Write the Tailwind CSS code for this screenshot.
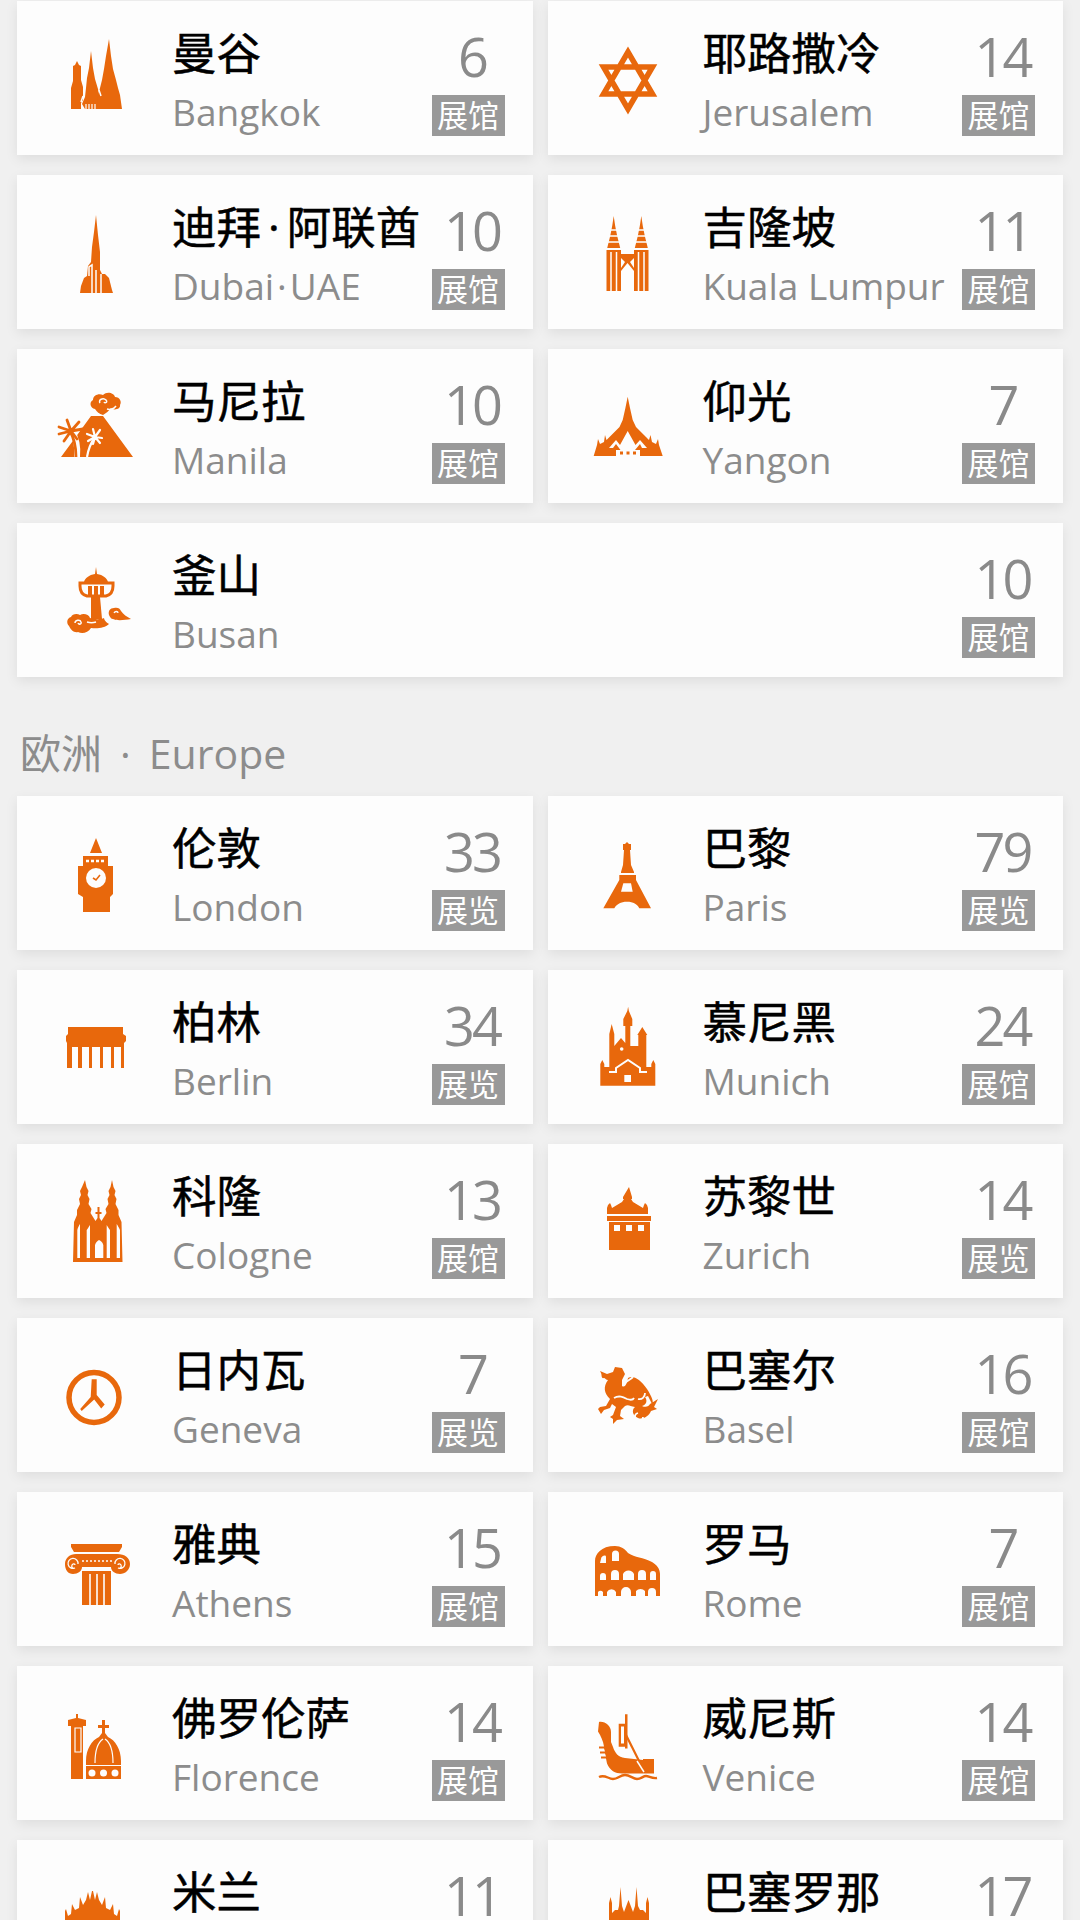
<!DOCTYPE html>
<html lang="zh-CN">
<head>
    <meta charset="UTF-8">
    <meta name="viewport" content="width=device-width, initial-scale=1.0">
    <title>城市展馆</title>
    <script src="https://cdn.jsdelivr.net/npm/@tailwindcss/browser@4"></script>
</head>
<body class="bg-[#f0f0f0] font-['Open_Sans','Noto_Sans_CJK_SC',sans-serif]">
    <div class="h-[1920px] overflow-hidden px-[17px] pt-[1px]">
        <div id="asia" class="grid grid-cols-2 gap-x-[15px] gap-y-[20px]"></div>
        <h2 class="mt-[57px] mb-[24px] h-[38px] leading-[38px] pl-[3px] text-[41px] font-normal text-[#8c8c8c] flex">
            <span>欧洲</span><span class="ml-[18px]">·</span><span class="ml-[18px]">Europe</span>
        </h2>
        <div id="europe" class="grid grid-cols-2 gap-x-[15px] gap-y-[20px]"></div>
    </div>

    <script>
    // city glyphs, drawn on a 100x100 grid with fill set by the parent svg
    const W = '#fdfdfd';
    const icons = {
        bangkok: `<path d="M32 33l2 4 2 1v14l2 7v13l-2 3v6H26V60l2-7V38l2-1z"/><path d="M46 23l2 17 2 11 3 10 2 10-2 10H40l-3-5 3-7 1-9 1-10 2-10z"/><path d="M64 11l2 17 2 13 3 11 2 8 2 7 2 14H52l1-12 2-9 2-8 2-11 2-13z"/><path d="M41 81v-5M44 81v-5M47 81v-5M50 81v-5" stroke="${W}" stroke-width="1.200"/><path d="M38 68l-2 6M54 62l2 6" stroke="${W}" stroke-width="1.500"/>`,
        dubai: `<path d="M51 13l2 20 2 17v18l2 4h3l4 4 3 12 1 3H35l1-7 3-8 3-2 1-10 3-4 1-15 2-15z"/><path d="M44 74v-9l3-2v28M51 68v23M56 72v19" stroke="${W}" stroke-width="1.500" fill="none"/>`,
        manila: `<path d="M16 81l14-19 16-22h12l30 41z"/><path d="M58 39c-4-1-6-3-8-6-5-1-6-7-2-9 0-5 6-7 10-5 4-4 11-2 12 2 5 0 7 5 5 8 1 4-6 6-9 3-2 3-5 5-8 7z"/><path d="M55 27c-2-3 3-6 6-3 2 2-1 4-2 2M62 33c3 1 7 0 9-3" stroke="${W}" stroke-width="1.500" fill="none"/><path d="M32 81c1-9 0-18-6-27" stroke="${W}" stroke-width="6" fill="none"/><path d="M31 81c0-9-1-17-6-26" stroke="currentColor" stroke-width="2.800" fill="none"/><path d="M26 55L14 51M26 55l-12 3M26 55l-4-11M26 55l8-9M26 55l12-2M26 55l-7 10M26 55l6 8" stroke="currentColor" stroke-width="2.800" stroke-linecap="round"/><path d="M42 81c1-6 3-13 8-20" stroke="${W}" stroke-width="2.200" fill="none"/><path d="M50 61l-8-3M50 61l-7 4M50 61l-2-8M50 61l5-7M50 61l7 1M50 61l5 6M50 61l-2 7" stroke="${W}" stroke-width="2.200" stroke-linecap="round"/>`,
        busan: `<path d="M51 17l1 7c6 1 10 4 11 8H39c1-4 5-7 11-8z"/><path d="M35 33h33v3c0 6-3 9-7 10H42c-4-1-7-4-7-10z" fill="none" stroke="currentColor" stroke-width="3"/><path d="M43 36v9h4v-9zM49 36v9h4v-9zM55 36v9h4v-9z"/><path d="M46 47h9l2 22H46z"/><path d="M24 76c-3-3-2-8 2-9 1-3 6-4 9-2 3-2 9-1 10 3 6 2 12 1 14 0 0 3 5 6 5 6-4 4-12 5-18 4-3 5-9 6-13 4-4 1-7-2-9-6z"/><path d="M30 73c0-3 5-4 6-1 1 2-2 3-3 1M42 72c3 1 6 1 9 0" stroke="${W}" stroke-width="1.500" fill="none"/><path d="M64 65c-1-4 1-7 5-7 3-1 6 0 7 3 2 3 6 6 10 8-6 1-14 2-18 0-2 0-3-2-4-4z"/><path d="M69 63c1-2 4-2 4 0" stroke="${W}" stroke-width="1.300" fill="none"/>`,
        london: `<path d="M51 15l6 15H45z"/><path d="M38 33h25v10h5v28l-3 3v15H38V74l-5-3V43h5z"/><circle cx="51" cy="55" r="10" fill="${W}"/><path d="M48 55l3 2 4-5" stroke="currentColor" stroke-width="1.600" fill="none"/><path d="M41 38h3M46 38h3M51 38h3M56 38h3" stroke="${W}" stroke-width="2.400"/>`,
        berlin: `<path d="M23 30h55v7l3 2v5l-2 2v25h-3V50H69v21h-3V50H58v21h-3V50H47v21h-3V50H37v21h-4V50h-6v21h-5V46l-1-2v-5l2-2z"/>`,
        cologne: `<path d="M40 9l1.500 7 2 4-1 4 2 4-1 5 3 5-1 4 5 8 2-3v-4h-2v-2h2v-5h2v5h2v2h-2v4l2 3 5-8-1-4 3-5-1-5 2-4-1-4 2-4 1.500-7 1.500 7 2 4-1 4 2 4-1 5 3 6 0 5 3 7 1 40H28l1-40 3-7 0-5 3-6-1-5 2-4-1-4 2-4z"/><path d="M32.300 87V59c.8-3 1.500-4 2.700-6v34zM41.700 87V59c1.500-2 2-3 3.300-5v33zM61.700 87V54c1 2 2 3 3.300 5v28zM71.700 87V53c1.200 2 2 3 3.300 6v28zM50 87V74c1-3 2.500-4 4-5 1.800 1 3.500 2 4.300 5v13z" fill="${W}"/>`,
        geneva: `<circle cx="49" cy="52.500" r="25" fill="none" stroke="currentColor" stroke-width="5.500"/><path d="M46.700 34.300h5v15.700l8 9.500-3.500 4-7-9-12.500 11.500-1.500-2 10.500-12z"/>`,
        athens: `<path d="M26 25h51v3l-3 5H29l-3-5z"/><path d="M31 35h41c8 0 13 4 13 10s-5 10-10 10c-5 0-9-3-9-7H37c0 4-4 7-9 7s-8-4-8-10 5-10 11-10z"/><path d="M33 45a5 5 0 1 0-3 4c-2 1-4-1-3-3s3-1 3 0M70 45a5 5 0 1 1 3 4c2 1 4-1 3-3s-3-1-3 0" stroke="${W}" stroke-width="1.300" fill="none"/><path d="M37 42h30" stroke="${W}" stroke-width="1.500" stroke-dasharray="2 2"/><path d="M37 52h29v34H37z"/><path d="M45 55v31M52 55v31M59 55v31" stroke="${W}" stroke-width="1.600"/>`,
        florence: `<path d="M31 21h2v4l8 2v6h-3v53H26V33h-3v-6l8-2z"/><path d="M30 35h6v24h-6z" fill="none" stroke="${W}" stroke-width="1.200"/><path d="M57 27h3v5h4v3h-4v5l3 4c7 3 13 12 13 24v4H41v-4c0-12 6-21 13-24l3-4v-5h-4v-3h4z"/><path d="M58 46c-6 4-8 14-8 24M60 46c6 4 8 14 8 24" stroke="${W}" stroke-width="1.200" fill="none"/><path d="M41 73h35v13H41z"/><circle cx="47" cy="80" r="3.500" fill="${W}"/><circle cx="58.500" cy="80" r="3.500" fill="${W}"/><circle cx="70" cy="80" r="3.500" fill="${W}"/>`,
        milan: `<path d="M20 100V44l1-2 2 7 3-2 1-10 3 6 4-2 1-11 3 8 3-5 2-8 2 8 2-9 1 0 2 9 2-8 2 8 3 5 3-8 1 11 4 2 3-6 1 10 3 2 2-7 1 2v56z"/><path d="M45 100V80c1-4 4-6 5.500-7 1.500 1 4.500 3 5.500 7v20z" fill="${W}"/>`,
        jerusalem: `<path d="M52 24L27.500 66h49zM52 81L27.500 39h49z" fill="none" stroke="currentColor" stroke-width="5.500"/>`,
        kl: `<path d="M37.700 14l1.500 10 2 10 3 12h-13l3-12 2-10zM65.300 14l1.500 10 2 10 3 12h-13l3-12 2-10z"/><path d="M30.500 48h14.500v41H30.500zM58 48h14.500v41H58z"/><path d="M45 52h13v4l-4 4 4 6v3l-6.500-8-6.500 8v-3l4-6-4-4z"/><path d="M33 28h9M32 34h11M31 40h13M60.500 28h9M59.500 34h11M58.500 40h13" stroke="${W}" stroke-width="1.500"/><path d="M35 50v39M40.500 50v39M62.500 50v39M68 50v39" stroke="${W}" stroke-width="1.500"/>`,
        yangon: `<path d="M51.700 20.700L54 32l2.700 12 3.300 7 10 10 3 3 1.500-5 1.500 7 4 2 2-5 1 6 3.700 11H17.700L21 69l1-6 2 5 4-2 1-7 1.500 5 3-3 10-10 3.200-7 2.700-12z"/><path d="M33 72l7-8 4 5 7.700-14 7.800 14 4.500-5 7 8h-5l-2-4-5 6H44.500L40 68l-3 4z" fill="${W}"/><path d="M40 74h24v6H40z" fill="${W}"/><path d="M44 75.500h3v3h-3zM50.500 75.500h3v3h-3zM57 75.500h3v3h-3z"/>`,
        paris: `<path d="M51 19l2 2h2v6h-1l1 15 3 7v1H45v-1l2-7 1-15h-1v-6h2zM43.300 52H60v5l15 28.300H63.300c-2-4-6-6.500-12.300-6.500s-10.300 2.500-12.700 6.500H27.300L43.300 57z"/><path d="M47.300 60.300H55l1.700 8.400H45z" fill="${W}"/>`,
        munich: `<path d="M24.300 88.700V67l2-4 2 4v3h5V37l2.400-10 2.600 10v12l6.700-8 4.300 5V29h-2v-7l4-8 .8-4.300.8 4.300 3.400 8v7h-2v20h8V38h-1l5-8 5 8h-1v32h5v-3l2-4 2 4v21.700z"/><path d="M33 75h7v-4l12-8 12 8v4h7" stroke="${W}" stroke-width="2" fill="none"/><circle cx="45.700" cy="52" r="1.800" fill="${W}"/><path d="M48.300 78H55v7h-6.700z" fill="${W}"/>`,
        zurich: `<path d="M53 16l3 10v2h-1l2 3 10 6 1-3 1-2 2 2 1 3v6H31v-6l1-3 2-2 1 2 1 3 10-6 2-3h-1v-2z"/><path d="M31 45h44v5H31zM33 51h41v28H33z"/><path d="M38 54h6v6h-6zM50 54h6v6h-6zM62 54h6v6h-6z" fill="${W}"/>`,
        basel: `<path d="M24 26l7 3 6-2 2-5 7 1 3 6-3 6 0 6c3 2 5-2 6-8 5-3 12 1 19 11 5 8 7 13 5 15l-4-8-3 1c3 4 1 8-3 9 4 2 7 0 8-2l8-5-4 8 3 2-6 2c-2 5-8 9-13 7-5-2-7-8-3-11-5-1-7-3-10-1l-4 4-1 6 4 3-7 1-4 4 0-5-3-2 3-2 3-8-4-3-2 4-6 2-3 4-3-5 2-2 6-1 4-7c-6-6-7-12-2-19-2 0-3-2-4-2-3 1-2-3-3-5z"/><path d="M48 39c2-3 6-4 9-7M62 54c4 1 7-2 7-6M38 53c5-3 9-1 13 1 3 1 6 1 7-1M67 72a4 4 0 1 1-5-4" stroke="${W}" stroke-width="1.800" fill="none"/>`,
        rome: `<path d="M19 77V42c0-7 6-15 20-15 6 0 10 3 13 7 7 5 15 4 24 9 5 3 8 7 8 12v22h-4v-4a4 4 0 0 0-8 0v4h-3v-5a6 6 0 0 0-9 0v5h-5v-4a5 5 0 0 0-10 0v4h-5v-4a5 5 0 0 0-9 0v4h-4v-4a3 3 0 0 0-5 0v4z"/><path d="M25 40c0-3 5-5 5-2v6h-6zM36 35a3.500 3.500 0 0 1 7 0v7h-7zM24 57a3 3 0 0 1 6 0v4h-6zM35 55a4 4 0 0 1 8 0v6h-8zM47 55a6 6 0 0 1 11 0v6H47zM62 55a4 4 0 0 1 8 0v6h-8zM74 55a3 3 0 0 1 6 0v6h-6z" fill="${W}"/>`,
        venice: `<path d="M49 21.200h2.500v34.400H49zM42.700 30.700H49v23h-6.300z"/><path d="M45 33.500h3v17h-3z" fill="${W}"/><path d="M50 42l18.300 36.600" stroke="currentColor" stroke-width="2.200"/><path d="M23 29c6-1 12 4 12 10v10l2 5c2 6 5 10 12 11l18 2v-1h11v14.500H46c-7 0-12-3-15-10l-1-5h-5v-2h5l-1-3h-5v-2h5l-1-3h-5v-2h5c-1-6-3-10-6-15z"/><path d="M61 68l7 11" stroke="${W}" stroke-width="1.500"/><path d="M23 84c6-3 9 2 14 2s7-4 12-4 8 4 12 4 6-3 9-3 6 3 11 2" stroke="currentColor" stroke-width="2.400" fill="none"/>`,
        barcelona: `<path d="M33 100V36l1.500-6 1.500 6v10l3-3 3 0 1-4 1.500-19 1.500 19 2 6 3-8 1.500-4 1.500 4 3 8 2-6 1.500-19 1.500 19 2 4 3 0 3 3V36l1.500-6 1.500 6v64z"/>`
    };

    const tag = '展馆', show = '展览';
    const asia = [
        ['曼谷', 'Bangkok', '6', tag, 'bangkok'],
        ['耶路撒冷', 'Jerusalem', '14', tag, 'jerusalem'],
        ['迪拜<span class="mx-[7px]">·</span>阿联酋', 'Dubai<span class="mx-[3px]">·</span>UAE', '10', tag, 'dubai'],
        ['吉隆坡', 'Kuala Lumpur', '11', tag, 'kl'],
        ['马尼拉', 'Manila', '10', tag, 'manila'],
        ['仰光', 'Yangon', '7', tag, 'yangon'],
        ['釜山', 'Busan', '10', tag, 'busan', true]
    ];
    const europe = [
        ['伦敦', 'London', '33', show, 'london'],
        ['巴黎', 'Paris', '79', show, 'paris'],
        ['柏林', 'Berlin', '34', show, 'berlin'],
        ['慕尼黑', 'Munich', '24', tag, 'munich'],
        ['科隆', 'Cologne', '13', tag, 'cologne'],
        ['苏黎世', 'Zurich', '14', show, 'zurich'],
        ['日内瓦', 'Geneva', '7', show, 'geneva'],
        ['巴塞尔', 'Basel', '16', tag, 'basel'],
        ['雅典', 'Athens', '15', tag, 'athens'],
        ['罗马', 'Rome', '7', tag, 'rome'],
        ['佛罗伦萨', 'Florence', '14', tag, 'florence'],
        ['威尼斯', 'Venice', '14', tag, 'venice'],
        ['米兰', 'Milan', '11', tag, 'milan'],
        ['巴塞罗那', 'Barcelona', '17', tag, 'barcelona']
    ];

    function card([name, en, count, label, icon, wide]) {
        return `
        <div class="${wide ? 'col-span-2' : ''} h-[154px] bg-[#fdfdfd] shadow-[0_4px_12px_rgba(0,0,0,0.08)] flex items-start pl-[28px] pr-[28px]">
            <svg viewBox="0 0 100 100" class="w-[100px] h-[100px] mt-[27px] shrink-0 fill-current text-[#e8680c]">${icons[icon]}</svg>
            <div class="ml-[27px] flex-1 min-w-0 whitespace-nowrap">
                <div class="mt-[25px] h-[54px] leading-[54px] text-[44.500px] text-black [-webkit-text-stroke:0.5px_black]">${name}</div>
                <div class="mt-[6px] h-[52px] leading-[52px] text-[37px] text-[#8c8c8c]">${en}</div>
            </div>
            <div class="w-[73px] shrink-0 flex flex-col items-center">
                <div class="mt-[25px] h-[60px] leading-[60px] pl-[8px] text-[54px] tracking-[-3px] text-[#8a8a8a]">${count}</div>
                <div class="mt-[9px] w-[73px] h-[41px] leading-[41px] bg-[#999999] text-white text-[31px] text-center">${label}</div>
            </div>
        </div>`;
    }

    document.getElementById('asia').innerHTML = asia.map(card).join('');
    document.getElementById('europe').innerHTML = europe.map(card).join('');
    </script>
</body>
</html>
